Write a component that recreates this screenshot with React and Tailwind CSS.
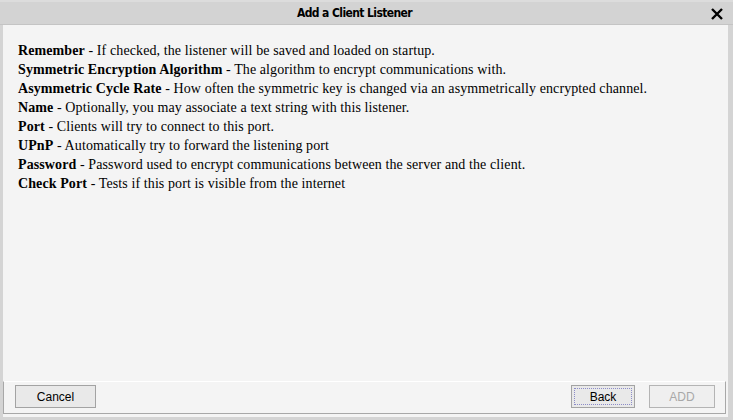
import React from 'react';

const items = [
  ['Remember', 'If checked, the listener will be saved and loaded on startup.'],
  ['Symmetric Encryption Algorithm', 'The algorithm to encrypt communications with.'],
  ['Asymmetric Cycle Rate', 'How often the symmetric key is changed via an asymmetrically encrypted channel.'],
  ['Name', 'Optionally, you may associate a text string with this listener.'],
  ['Port', 'Clients will try to connect to this port.'],
  ['UPnP', 'Automatically try to forward the listening port'],
  ['Password', 'Password used to encrypt communications between the server and the client.'],
  ['Check Port', 'Tests if this port is visible from the internet'],
];

function App() {
  return (
    <div className="w-[733px] h-[420px] bg-[#d4d4d4] flex flex-col overflow-hidden">
      {/* Title bar */}
      <div className="h-[25px] shrink-0 relative flex items-center justify-center pr-[24px] border-t-2 border-t-[#dcdcdc] bg-[#d3d3d3] border-b border-b-[#c4c4c4]">
        <span className="text-[12px] font-bold text-black tracking-[-0.6px]" style={{ fontFamily: '"DejaVu Sans Condensed", "Liberation Sans", sans-serif' }}>
          Add a Client Listener
        </span>
        <svg className="absolute right-[10px] top-[6px]" width="12" height="12" viewBox="0 0 12 12">
          <path d="M1 1 L11 11 M11 1 L1 11" stroke="#000" strokeWidth="2.4" />
        </svg>
      </div>

      {/* Content */}
      <div className="flex-1 ml-[3px] mr-[5px] mb-[3px] bg-[#f4f4f4] flex flex-col">
        <div className="flex-1 pl-[15px] pt-[16px] text-[14px] leading-[19px] tracking-[0.1px] text-black" style={{ fontFamily: '"Liberation Serif", serif' }}>
          {items.map(([label, desc]) => (
            <div key={label}>
              <span className="font-bold">{label}</span> - {desc}
            </div>
          ))}
        </div>

        {/* Button panel */}
        <div className="h-[33px] mr-[2px] mb-[3px] border-t border-t-white border-l border-l-[#a8a8a8] border-r border-r-[#a8a8a8] border-b border-b-[#a8a8a8] flex items-start pt-[3px] pl-[11px] pr-[10px] text-[12px]" style={{ fontFamily: '"Liberation Sans", sans-serif' }}>
          <button className="w-[81px] h-[23px] bg-[#e9e9e9] border border-[#a3a3a3] text-black">Cancel</button>
          <div className="flex-1" />
          <button className="w-[64px] h-[23px] bg-[#e9e9e9] border border-[#a3a3a3] text-black p-[2px]">
            <span className="flex w-full h-full items-center justify-center border border-dotted border-[#8c8cc8]">Back</span>
          </button>
          <button className="w-[66px] h-[23px] ml-[14px] bg-[#efefef] border border-[#b4b4b4] text-[#a8a8a8]">ADD</button>
        </div>
      </div>
    </div>
  );
}

export default App;
